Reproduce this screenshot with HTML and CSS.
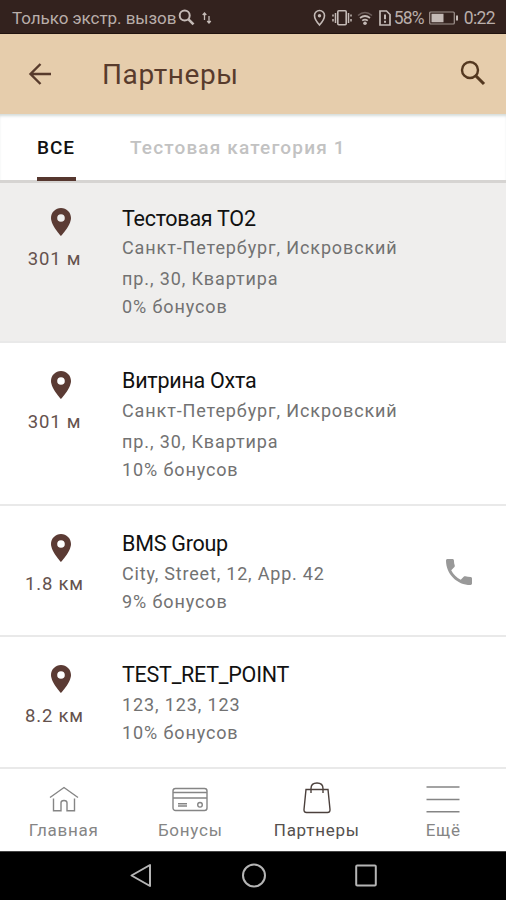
FILE: index.html
```html
<!DOCTYPE html>
<html lang="ru">
<head>
<meta charset="utf-8">
<title>Партнеры</title>
<link rel="stylesheet" href="styles.css">
</head>
<body>
<svg class="defs" width="0" height="0">
  <symbol id="pin" viewBox="0 0 20 28"><path fill-rule="evenodd" d="M10 0C4.500 0 0 4.400 0 9.900 0 17.200 10 28 10 28s10-10.800 10-18.100C20 4.400 15.500 0 10 0zm0 6.200a3.800 3.800 0 1 1 0 7.600 3.800 3.800 0 0 1 0-7.600z"/></symbol>
</svg>
<div class="screen">
  <div class="status">
    <span class="carrier">Только экстр. вызов</span>
    <svg class="s-search" width="17" height="17" viewBox="0 0 17 17"><circle cx="6.700" cy="6.500" r="5" stroke-width="2"/><path d="M10.500 10.300l5 5" stroke-width="2.600"/></svg>
    <svg class="s-arrows" width="10" height="14" viewBox="0 0 10 14"><path d="M2.500 9V2M.7 4l1.800-2 1.800 2M7 5v7M5.200 10L7 12l1.800-2" stroke-width="1.300"/></svg>
    <div class="indicators">
      <svg width="13" height="18" viewBox="0 0 13 18"><path d="M6.500 1.500a5 5 0 0 0-5 5C1.500 10.500 6.500 16 6.500 16s5-5.500 5-9.500a5 5 0 0 0-5-5z" stroke-width="1.600"/><circle class="solid" cx="6.500" cy="6.700" r="1.700"/></svg>
      <svg width="20" height="18" viewBox="0 0 20 18"><rect x="5.800" y="1.800" width="8.400" height="14" rx="1" stroke-width="1.600"/><path d="M3.500 4v10M16.500 4v10M1 5.500v2M1 10v2.500M19 5.500v2M19 10v2.500" stroke-width="1.500"/></svg>
      <svg width="16" height="16" viewBox="0 0 16 16"><path class="dim" d="M1 5.500Q8-.5 15 5.500" stroke-width="1.500"/><path d="M3 8Q8 4 13 8M5.200 10.700Q8 8.500 10.800 10.700" stroke-width="1.700"/><circle class="solid" cx="8" cy="13.300" r="1.800"/></svg>
      <svg width="12" height="16" viewBox="0 0 12 16"><path d="M1 1h6.500L11 4.500V15H1z" stroke-width="1.700"/><path d="M6 4.500v4.700M6 10.700v2" stroke-width="2"/></svg>
      <span class="percent">58%</span>
      <svg width="29" height="14" viewBox="0 0 29 14"><rect x=".7" y="1" width="24.600" height="12" rx="1" stroke-width="1.200" opacity=".75"/><path class="solid" stroke="none" d="M2.500 2.800h12v8.400h-12zM27 4.500h2v5h-2z"/></svg>
      <span class="clock">0:22</span>
    </div>
  </div>

  <header class="appbar">
    <svg width="24" height="24" viewBox="0 0 24 24"><path d="M12.500 2L2.500 12l10 10M2.500 12H23" stroke-width="2.400"/></svg>
    <h1>Партнеры</h1>
    <svg class="find" width="26" height="26" viewBox="0 0 26 26"><circle cx="10" cy="10" r="8" stroke-width="2.400"/><path d="M16 16l8 8" stroke-width="3.100"/></svg>
  </header>

  <nav class="tabs">
    <div class="tab active"><span>ВСЕ</span></div>
    <div class="tab"><span>Тестовая категория 1</span></div>
  </nav>

  <main class="list">
    <div class="row tall pressed">
      <div class="place"><svg class="pin" width="20" height="28"><use href="#pin"/></svg><span>301 м</span></div>
      <div class="info"><h2>Тестовая ТО2</h2><p class="addr">Санкт-Петербург, Искровский<br>пр., 30, Квартира</p><p>0% бонусов</p></div>
    </div>
    <div class="row tall">
      <div class="place"><svg class="pin" width="20" height="28"><use href="#pin"/></svg><span>301 м</span></div>
      <div class="info"><h2>Витрина Охта</h2><p class="addr">Санкт-Петербург, Искровский<br>пр., 30, Квартира</p><p>10% бонусов</p></div>
    </div>
    <div class="row">
      <div class="place"><svg class="pin" width="20" height="28"><use href="#pin"/></svg><span>1.8 км</span></div>
      <div class="info"><h2>BMS Group</h2><p class="addr latin">City, Street, 12, App. 42</p><p>9% бонусов</p></div>
      <svg class="phone" width="26" height="26" viewBox="3 3 18 18"><path d="M6.620 10.790c1.440 2.830 3.760 5.140 6.590 6.590l2.200-2.200c.27-.27.67-.36 1.020-.24 1.120.37 2.330.57 3.570.57.55 0 1 .45 1 1V20c0 .55-.45 1-1 1-9.390 0-17-7.610-17-17 0-.55.45-1 1-1h3.500c.55 0 1 .45 1 1 0 1.250.2 2.450.57 3.570.11.35.03.74-.25 1.020l-2.200 2.200z"/></svg>
    </div>
    <div class="row">
      <div class="place"><svg class="pin" width="20" height="28"><use href="#pin"/></svg><span>8.2 км</span></div>
      <div class="info"><h2>TEST_RET_POINT</h2><p class="addr">123, 123, 123</p><p>10% бонусов</p></div>
    </div>
  </main>

  <nav class="bottom">
    <div class="item"><svg width="36" height="36" viewBox="0 0 36 36"><path d="M4 17.500L18 7.500l14 10M7.500 18.500v12.300H15v-8q0-2.300 3-2.300t3 2.300v8h7.500V18.500"/></svg><span>Главная</span></div>
    <div class="item"><svg width="36" height="36" viewBox="0 0 36 36"><rect x="1" y="8.500" width="34" height="22" rx="2.500"/><path d="M1 12.500h34M1 18h34M6 23.700h9M6 26h9"/><circle cx="28" cy="24.800" r="2.300"/></svg><span>Бонусы</span></div>
    <div class="item current"><svg width="36" height="36" viewBox="0 0 36 36"><path d="M7 9.500h22l2 20q.2 3-2.500 3h-21Q4.800 32.500 5 29.500zM12 13V8.500Q12 3 18 3t6 5.500V13"/></svg><span>Партнеры</span></div>
    <div class="item"><svg width="36" height="36" viewBox="0 0 36 36"><path d="M1.500 7h33M1.500 19.500h33M1.500 31.800h33"/></svg><span>Ещё</span></div>
  </nav>

  <div class="system">
    <svg width="24" height="26" viewBox="0 0 24 26"><path d="M21 2v21L2.500 12.500z"/></svg>
    <svg width="26" height="26" viewBox="0 0 26 26"><circle cx="13" cy="12.500" r="11"/></svg>
    <svg width="24" height="26" viewBox="0 0 24 26"><rect x="2.200" y="2.500" width="19.600" height="20" rx="1"/></svg>
  </div>
</div>
</body>
</html>
```
FILE: styles.css
```css
* { box-sizing: border-box; }
body { margin: 0; font-family: Roboto, "Noto Sans", sans-serif; background: #fff; }
h1, h2, p { margin: 0; font-weight: 400; }
svg { display: block; flex: none; fill: none; }
.defs { position: absolute; }
.screen { width: 506px; height: 900px; display: flex; flex-direction: column; overflow: hidden; white-space: nowrap; }

.status { height: 34px; background: #33221e; border-bottom: 1px solid #21130f; color: #b9aeaa; display: flex; align-items: center; padding: 2px 11px 0 12px; font-size: 17px; }
.status svg { stroke: #c4bab6; }
.status .solid { fill: #c4bab6; stroke: none; }
.status .dim { opacity: .4; }
.carrier { letter-spacing: -.05px; }
.s-search { margin-left: 2px; }
.s-arrows { margin-left: 7px; }
.indicators { margin-left: auto; display: flex; align-items: center; font-size: 17.500px; }
.indicators svg + svg { margin-left: 5.500px; }
.percent { margin: 0 5px 0 3px; letter-spacing: -.9px; }
.clock { margin-left: 6px; letter-spacing: -.6px; }

.appbar { height: 80px; background: #e6cdac; color: #583b2c; display: flex; align-items: center; padding: 0 20px 0 28px; }
.appbar svg { stroke: #583b2c; }
.appbar h1 { font-size: 28px; letter-spacing: .6px; margin: 1px 0 0 50px; }
.appbar .find { margin: -2px 0 0 auto; stroke: #543820; }

.tabs { height: 69px; border-bottom: 3px solid #d6d4d2; box-shadow: inset 0 3px 3px -1px #d4dbd9; display: flex; padding-left: 37px; gap: 54px; font-size: 19px; font-weight: 500; color: #c2c2c2; }
.tab { height: 67px; padding-top: 22px; line-height: 24px; letter-spacing: 1.150px; }
.active { color: #111; border-bottom: 4px solid #56372f; width: 39px; letter-spacing: .9px; }

.list { color: #727272; }
.row { height: 131.500px; border-bottom: 2px solid #e9e9e9; display: flex; align-items: flex-start; }
.tall { height: 162.500px; }
.pressed { height: 160px; background: #efeeed; }
.place { width: 122px; padding: 28px 0 0; display: flex; flex-direction: column; align-items: center; font-size: 18.500px; letter-spacing: .8px; color: #65524d; line-height: 24px; }
.place span { margin: 10.500px 13px 0 0; }
.pin { fill: #5b3b34; }
.info { padding-top: 25px; flex: 1; font-size: 18px; letter-spacing: .88px; }
.info h2 { font-size: 21.500px; line-height: 26px; letter-spacing: -.25px; color: #111; }
.addr { line-height: 31px; margin-top: 1px; }
.addr.latin { letter-spacing: .8px; }
.info p + p { line-height: 26px; }
.pressed .place, .pressed .info { margin-top: -3px; }
.pressed h2 { padding-top: 1px; margin-bottom: -1px; }
.phone { fill: #999; margin: 53px 34px 0 0; }

.bottom { flex: none; height: 82px; display: grid; grid-template-columns: repeat(4, 1fr); font-size: 17px; letter-spacing: .75px; color: #858585; }
.item { display: flex; flex-direction: column; align-items: center; padding: 11px 0 0 1px; }
.item svg { stroke: #858585; stroke-width: 1.400; }
.item span { line-height: 22px; margin-top: 3px; }
.current { color: #55504e; }
.current svg { stroke: #4b403c; }

.system { flex: 1; background: #000; border-top: 1px solid #444; display: flex; justify-content: center; align-items: center; gap: 87.500px; padding-left: 1px; }
.system svg { stroke: #b5b5b5; stroke-width: 2; stroke-linejoin: round; }
```
